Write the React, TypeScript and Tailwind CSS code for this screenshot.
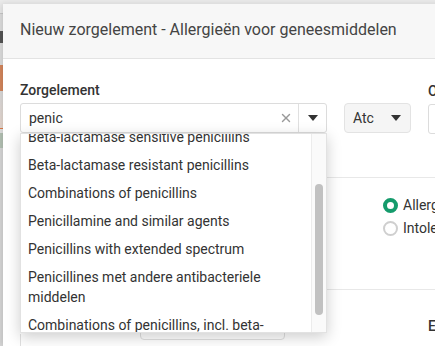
import { X } from "lucide-react"

const options: string[] = [
  "Beta-lactamase sensitive penicillins",
  "Beta-lactamase resistant penicillins",
  "Combinations of penicillins",
  "Penicillamine and similar agents",
  "Penicillins with extended spectrum",
  "Penicillines met andere antibacteriele middelen",
  "Combinations of penicillins, incl. beta-lactamase inhibitors",
]

function Caret() {
  return (
    <svg width="10" height="6" viewBox="0 0 10 6" className="fill-[#333]">
      <path d="M0 0 L10 0 L5 6 Z" />
    </svg>
  )
}

function PageStrip() {
  // sliver of the page behind the dialog
  return (
    <div className="w-[3px] shrink-0 flex flex-col">
      <div className="h-[13px] bg-[#ebebeb]" />
      <div className="h-px bg-[#c9c9c9]" />
      <div className="h-[17px] bg-[#dedede]" />
      <div className="h-[12px] bg-[#555]" />
      <div className="h-[22px] bg-[#dedede]" />
      <div className="h-[26px] bg-[#d6875d]" />
      <div className="h-[37px] bg-gradient-to-b from-[#dcdcdc] to-[#e8d9d0]" />
      <div className="h-px bg-[#e07d4a]" />
      <div className="h-[4px] bg-[#e4e4e4]" />
      <div className="h-[15px] bg-[#b6c3b6]" />
      <div className="flex-1 bg-[#d8d8d8]" />
    </div>
  )
}

function Dropdown() {
  return (
    <div className="absolute left-0 top-full w-[307px] h-[200px] bg-white border border-[#e2e2e2] shadow-[0_4px_14px_rgba(0,0,0,0.2)] flex z-10">
      <div className="flex-1 overflow-hidden">
        <div className="mt-[-11px]">
          {options.map((o) => (
            <div key={o} className="pl-[7px] pr-2 py-1 text-[14px] leading-5 text-[#333]">
              {o}
            </div>
          ))}
        </div>
      </div>
      <div className="w-[15px] border-l border-[#ececec] bg-[#fafafa] pt-[50px]">
        <div className="ml-[3px] w-[8px] h-[131px] rounded bg-[#c1c1c1]" />
      </div>
    </div>
  )
}

export default function App() {
  return (
    <div className="w-[435px] h-[346px] overflow-hidden flex bg-[#ebebeb] font-['Roboto',sans-serif]">
      <PageStrip />
      <div className="mt-[4px] w-[600px] shrink-0 bg-white shadow-[-2px_0_6px_rgba(0,0,0,0.12)]">
        <div className="h-[55px] bg-[#f7f7f7] border-b border-[#e3e3e3] pl-[17px] pt-[16px] text-[16px] leading-5 text-[#444]">
          Nieuw zorgelement - Allergieën voor geneesmiddelen
        </div>
        <div className="pl-[17px] pt-[21px]">
          <div className="flex">
            <div className="w-[307px] flex flex-col">
              <div className="text-[14px] leading-5 font-medium text-[#333]">Zorgelement</div>
              <div className="relative mt-[3px]">
                <div className="h-[30px] flex items-center border border-[#dcdcdc] rounded-[3px] bg-white">
                  <div className="flex-1 pl-2 text-[14px] text-[#333]">penic</div>
                  <X size={14} strokeWidth={2.5} className="text-[#999] mr-[5px]" />
                  <div className="w-[28px] h-full border-l border-[#e0e0e0] flex items-center justify-center">
                    <Caret />
                  </div>
                </div>
                <Dropdown />
              </div>
            </div>
            <div className="ml-[17px] pt-[23px]">
              <div className="w-[67px] h-[30px] bg-[#f5f5f5] border border-[#e3e3e3] rounded-[4px] flex items-center justify-between pl-[8px] pr-[9px] text-[14px] text-[#333]">
                <span>Atc</span>
                <Caret />
              </div>
            </div>
            <div className="ml-[17px] flex flex-col">
              <div className="text-[14px] leading-5 font-medium text-[#333] pt-px">Omschrijving</div>
              <div className="mt-[3px] w-[150px] h-[30px] border border-[#dcdcdc] rounded-[3px]" />
            </div>
          </div>
          <div className="mt-[43px] border-t border-[#e8e8e8] pl-[363px] pt-[17px] h-[112px]">
            <div className="flex items-center gap-[5px] h-[20px] text-[14px] text-[#333]">
              <span className="w-[15px] h-[15px] rounded-full border-[4px] border-[#159b6c] bg-white" />
              <span>Allergie</span>
            </div>
            <div className="flex items-center gap-[5px] h-[20px] mt-[3px] text-[14px] text-[#333]">
              <span className="w-[15px] h-[15px] rounded-full border-2 border-[#cfcfcf] bg-white" />
              <span>Intolerantie</span>
            </div>
          </div>
          <div className="border-t border-[#e8e8e8] flex">
            <div className="w-px h-[60px] bg-[#e0e0e0] mt-[44px]" />
            <div className="ml-[119px] mt-[20px] w-[145px] h-[30px] border border-[#e0e0e0] rounded-[4px]" />
            <div className="ml-[143px] pt-[26px] text-[14px] leading-5 font-medium text-[#333]">Einddatum</div>
          </div>
        </div>
      </div>
    </div>
  )
}
